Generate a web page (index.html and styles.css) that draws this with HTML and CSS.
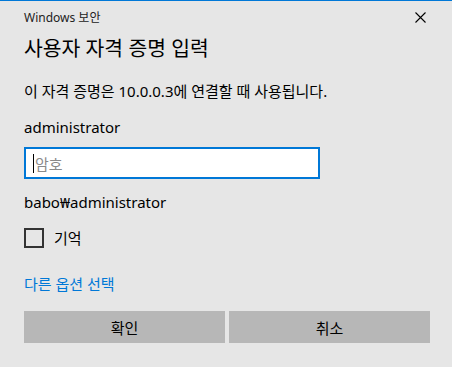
FILE: index.html
```html
<!DOCTYPE html>
<html lang="ko">
<head>
  <meta charset="UTF-8">
  <title>Windows 보안</title>
  <link rel="stylesheet" href="styles.css">
</head>
<body>

<div class="dialog">
  <div class="titlebar">
    <span class="app-name">Windows 보안</span>
    <svg class="close" width="11" height="11" viewBox="0 0 11 11">
      <path d="M0.5 0.5 L10.5 10.5 M10.5 0.5 L0.5 10.5" stroke="#000" stroke-width="1.1" fill="none"/>
    </svg>
  </div>

  <h1>사용자 자격 증명 입력</h1>
  <p class="desc">이 자격 증명은 10.0.0.3에 연결할 때 사용됩니다.</p>

  <div class="user">administrator</div>
  <div class="field">
    <span class="caret"></span>
    <span class="placeholder">암호</span>
  </div>
  <div class="domain">babo₩administrator</div>

  <label class="remember">
    <span class="box"></span>
    <span>기억</span>
  </label>

  <a class="more" href="#">다른 옵션 선택</a>

  <div class="actions">
    <button class="btn">확인</button>
    <button class="btn">취소</button>
  </div>
</div>

</body>
</html>
```

FILE: styles.css
```css
:root {
  --bg-color: #e6e6e6;
  --accent-color: #0078d7;
  --text-color: #000;
  --btn-color: #b7b7b7;
}
* { box-sizing: border-box; }
html, body {
  margin: 0;
  padding: 0;
  height: 100%;
}
body {
  font-family: "Noto Sans", "Noto Sans CJK KR", sans-serif;
  background-color: var(--bg-color);
  color: var(--text-color);
  border-top: 1px solid var(--accent-color);
}
.dialog {
  padding: 0 22px 0 24px;
  display: flex;
  flex-direction: column;
  align-items: flex-start;
}
.titlebar {
  align-self: stretch;
  display: flex;
  justify-content: space-between;
  align-items: center;
  height: 30px;
  padding-top: 1px;
}
.app-name { font-size: 12px; color: #222; }
.close { margin-right: 4px; margin-top: 2px; }
h1 {
  font-weight: 400;
  font-size: 20.4px;
  margin: 3px 0 0;
  line-height: 28px;
}
.desc {
  font-size: 15px;
  margin: 19px 0 0;
  line-height: 20px;
}
.user {
  font-size: 15px;
  margin-top: 16px;
  line-height: 20px;
}
.field {
  width: 296px;
  height: 32px;
  margin-top: 10px;
  background: #fff;
  border: 2px solid var(--accent-color);
  display: flex;
  align-items: center;
  padding-left: 7px;
}
.caret {
  width: 1px;
  height: 19px;
  background: #000;
}
.placeholder {
  color: #8a8a8a;
  font-size: 15px;
  margin-left: 1px;
}
.domain {
  font-size: 15px;
  margin-top: 13px;
  line-height: 20px;
}
.remember {
  display: flex;
  align-items: center;
  gap: 10px;
  font-size: 15px;
  margin-top: 15px;
}
.box {
  width: 20px;
  height: 20px;
  border: 2px solid #333;
}
.more {
  color: var(--accent-color);
  text-decoration: none;
  font-size: 15px;
  margin-top: 26px;
  line-height: 20px;
}
.actions {
  align-self: stretch;
  display: flex;
  gap: 4px;
  margin-top: 17px;
}
.btn {
  flex: 1;
  height: 32px;
  border: none;
  background: var(--btn-color);
  font-family: inherit;
  font-size: 15px;
  color: #000;
  padding: 0;
}
```
